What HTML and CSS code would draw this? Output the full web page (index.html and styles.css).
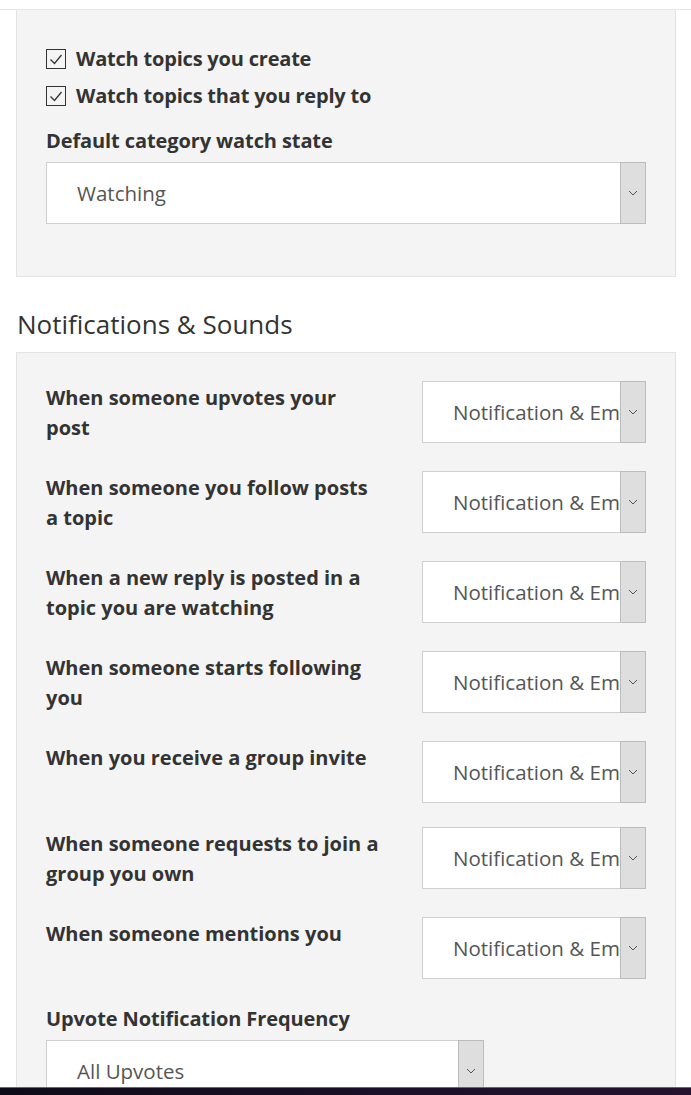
FILE: index.html
```html
<!DOCTYPE html>
<html lang="en">
<head>
<meta charset="utf-8">
<title>Notification settings</title>
<link rel="stylesheet" href="styles.css">
</head>
<body>
<div class="topbar"></div>
<main class="page">
  <section class="panel panel-watch">
    <label class="check">
      <span class="box"><svg viewBox="0 0 20 20" width="20" height="20"><path d="M4.5 10.5 L8.5 14.5 L15.5 6" fill="none" stroke="#333" stroke-width="1.3"/></svg></span>
      Watch topics you create
    </label>
    <label class="check">
      <span class="box"><svg viewBox="0 0 20 20" width="20" height="20"><path d="M4.5 10.5 L8.5 14.5 L15.5 6" fill="none" stroke="#333" stroke-width="1.3"/></svg></span>
      Watch topics that you reply to
    </label>
    <div class="field-label">Default category watch state</div>
    <div class="select select-full">
      <span class="select-value">Watching</span>
      <span class="select-btn"><svg viewBox="0 0 10 6" width="10" height="6"><path d="M1 1 L5 5 L9 1" fill="none" stroke="#555" stroke-width="1"/></svg></span>
    </div>
  </section>

  <h2 class="section-title">Notifications &amp; Sounds</h2>

  <section class="panel panel-notify">
    <div class="row">
      <div class="row-label">When someone upvotes your post</div>
      <div class="select select-small"><span class="select-value">Notification &amp; Email</span><span class="select-btn"><svg viewBox="0 0 10 6" width="10" height="6"><path d="M1 1 L5 5 L9 1" fill="none" stroke="#555" stroke-width="1"/></svg></span></div>
    </div>
    <div class="row">
      <div class="row-label">When someone you follow posts a topic</div>
      <div class="select select-small"><span class="select-value">Notification &amp; Email</span><span class="select-btn"><svg viewBox="0 0 10 6" width="10" height="6"><path d="M1 1 L5 5 L9 1" fill="none" stroke="#555" stroke-width="1"/></svg></span></div>
    </div>
    <div class="row">
      <div class="row-label">When a new reply is posted in a topic you are watching</div>
      <div class="select select-small"><span class="select-value">Notification &amp; Email</span><span class="select-btn"><svg viewBox="0 0 10 6" width="10" height="6"><path d="M1 1 L5 5 L9 1" fill="none" stroke="#555" stroke-width="1"/></svg></span></div>
    </div>
    <div class="row">
      <div class="row-label">When someone starts following you</div>
      <div class="select select-small"><span class="select-value">Notification &amp; Email</span><span class="select-btn"><svg viewBox="0 0 10 6" width="10" height="6"><path d="M1 1 L5 5 L9 1" fill="none" stroke="#555" stroke-width="1"/></svg></span></div>
    </div>
    <div class="row row-single">
      <div class="row-label">When you receive a group invite</div>
      <div class="select select-small"><span class="select-value">Notification &amp; Email</span><span class="select-btn"><svg viewBox="0 0 10 6" width="10" height="6"><path d="M1 1 L5 5 L9 1" fill="none" stroke="#555" stroke-width="1"/></svg></span></div>
    </div>
    <div class="row">
      <div class="row-label">When someone requests to join a group you own</div>
      <div class="select select-small"><span class="select-value">Notification &amp; Email</span><span class="select-btn"><svg viewBox="0 0 10 6" width="10" height="6"><path d="M1 1 L5 5 L9 1" fill="none" stroke="#555" stroke-width="1"/></svg></span></div>
    </div>
    <div class="row row-last">
      <div class="row-label">When someone mentions you</div>
      <div class="select select-small"><span class="select-value">Notification &amp; Email</span><span class="select-btn"><svg viewBox="0 0 10 6" width="10" height="6"><path d="M1 1 L5 5 L9 1" fill="none" stroke="#555" stroke-width="1"/></svg></span></div>
    </div>
    <div class="field-label">Upvote Notification Frequency</div>
    <div class="select select-mid">
      <span class="select-value">All Upvotes</span>
      <span class="select-btn"><svg viewBox="0 0 10 6" width="10" height="6"><path d="M1 1 L5 5 L9 1" fill="none" stroke="#555" stroke-width="1"/></svg></span>
    </div>
  </section>
</main>
<div class="taskbar"></div>
</body>
</html>
```

FILE: styles.css
```css
* { box-sizing: border-box; }

body {
  margin: 0;
  background: #fff;
  font-family: "Open Sans", "Noto Sans", "Liberation Sans", sans-serif;
  color: #333;
}

.topbar {
  height: 10px;
  border-bottom: 1px solid #e6e6e6;
}

.page {
  padding: 0 15px 0 16px;
}

.panel {
  background: #f4f4f4;
  border: 1px solid #e3e3e3;
  padding-left: 29px;
  padding-right: 29px;
}

.panel-watch {
  border-top: none;
  padding-top: 34px;
  padding-bottom: 52px;
}

.check {
  display: flex;
  align-items: center;
  gap: 10px;
  height: 30px;
  margin-bottom: 7px;
  font-size: 20px;
  font-weight: 700;
  letter-spacing: -0.2px;
  line-height: 30px;
}

.box {
  width: 20px;
  height: 20px;
  border: 1px solid #333;
  display: flex;
  align-items: center;
  justify-content: center;
}

.box svg { display: block; margin: -1px; }

.field-label {
  font-size: 20px;
  font-weight: 700;
  letter-spacing: -0.1px;
  line-height: 30px;
  margin-bottom: 6px;
}

.panel-watch .field-label { margin-top: 15px; }

.select {
  display: flex;
  height: 62px;
  background: #fff;
  border: 1px solid #cfcfcf;
}

.select-value {
  flex: 1;
  overflow: hidden;
  white-space: nowrap;
  padding-left: 30px;
  font-size: 20.5px;
  line-height: 61px;
  color: #555;
}

.select-btn {
  width: 26px;
  flex: none;
  margin: -1px -1px -1px 0;
  background: #dedede;
  border: 1px solid #bcbcbc;
  display: flex;
  align-items: center;
  justify-content: center;
}

.select-full { width: 600px; }
.select-small { width: 224px; }
.select-mid { width: 438px; }

.section-title {
  margin: 29px 0 10px 1px;
  font-size: 26px;
  font-weight: 400;
  line-height: 36px;
  color: #333;
}

.panel-notify {
  padding-top: 28px;
  padding-bottom: 40px;
}

.row {
  display: flex;
  justify-content: space-between;
  align-items: flex-start;
  margin-bottom: 28px;
}

.row-single { margin-bottom: 24px; }
.row-last { margin-bottom: 25px; }

.row-label {
  width: 334px;
  padding-top: 2px;
  font-size: 20px;
  font-weight: 700;
  line-height: 30px;
}

.taskbar {
  position: fixed;
  left: 0;
  right: 0;
  bottom: 0;
  height: 8px;
  border-top: 1px solid #5a5fb8;
  background: linear-gradient(to right, #0e0b18, #1b1028 60%, #24122e);
}
```
